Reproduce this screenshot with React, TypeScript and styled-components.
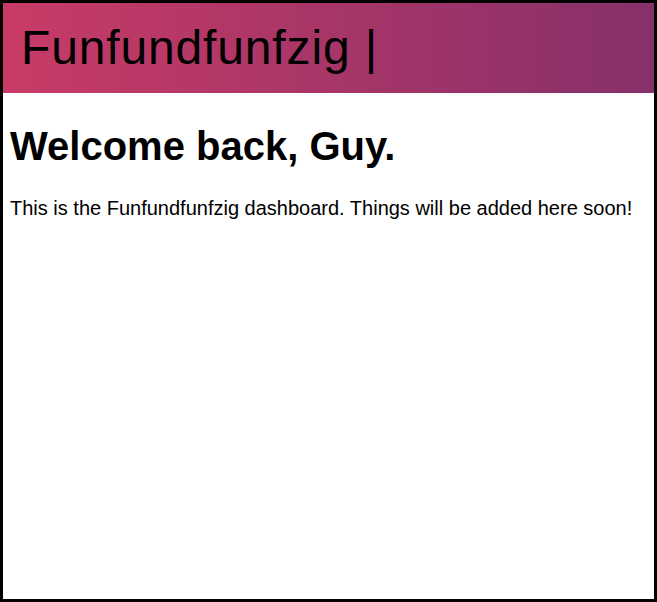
import React from "react";
import styled, { createGlobalStyle } from "styled-components";

const Global = createGlobalStyle`
  html, body { margin: 0; padding: 0; background: #fff; }
  body { font-family: "Liberation Sans", Arial, sans-serif; color: #000; }
  * { box-sizing: border-box; }
`;

const Frame = styled.div`
  width: 657px;
  height: 602px;
  border: 3px solid #000;
  display: flex;
  flex-direction: column;
  background: #fff;
`;

const Header = styled.header`
  height: 90px;
  flex: none;
  display: flex;
  align-items: center;
  padding-left: 18px;
  background: linear-gradient(to right, #c83b66, #87306a);
`;

const Brand = styled.div`
  font-size: 48px;
  letter-spacing: 0.85px;
  line-height: 1;
  color: #000;
`;

const Main = styled.main`
  padding: 0 7px;
`;

const Title = styled.h1`
  margin: 31px 0 0;
  font-size: 40px;
  font-weight: bold;
  line-height: 45px;
`;

const Text = styled.p`
  margin: 28px 0 0;
  font-size: 20px;
  line-height: 22px;
`;

export default function App() {
  return (
    <>
      <Global />
      <Frame>
        <Header>
          <Brand>Funfundfunfzig |</Brand>
        </Header>
        <Main>
          <Title>Welcome back, Guy.</Title>
          <Text>This is the Funfundfunfzig dashboard. Things will be added here soon!</Text>
        </Main>
      </Frame>
    </>
  );
}
